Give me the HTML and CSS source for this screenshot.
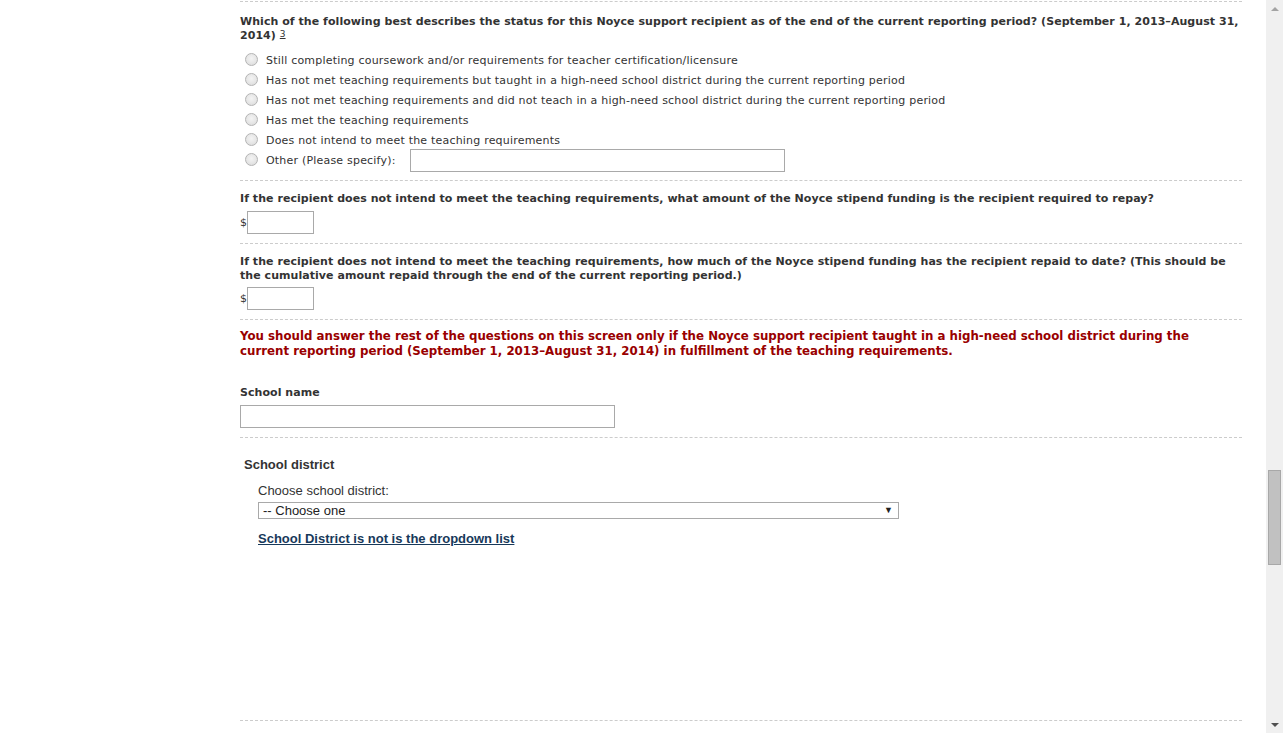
FILE: index.html
```html
<!DOCTYPE html>
<html lang="en">

<head>
  <meta charset="UTF-8">
  <title>Noyce recipient status</title>
  <link rel="stylesheet" href="styles.css">
</head>

<body>
  <div class="page">
    <!-- form area -->
    <main class="form">

      <!-- status question -->
      <div class="q q-first">
        <p class="q-title">Which of the following best describes the status for this Noyce support recipient as of the end of the current reporting period? (September 1, 2013&ndash;August 31, 2014) <a class="fn" href="#">3</a></p>
        <ul class="options">
          <li><label><input type="radio" name="status"> Still completing coursework and/or requirements for teacher certification/licensure</label></li>
          <li><label><input type="radio" name="status"> Has not met teaching requirements but taught in a high-need school district during the current reporting period</label></li>
          <li><label><input type="radio" name="status"> Has not met teaching requirements and did not teach in a high-need school district during the current reporting period</label></li>
          <li><label><input type="radio" name="status"> Has met the teaching requirements</label></li>
          <li><label><input type="radio" name="status"> Does not intend to meet the teaching requirements</label></li>
          <li><label><input type="radio" name="status"> Other (Please specify):</label><input type="text" class="txt txt-other"></li>
        </ul>
      </div>

      <!-- amount to repay -->
      <div class="q">
        <p class="q-title">If the recipient does not intend to meet the teaching requirements, what amount of the Noyce stipend funding is the recipient required to repay?</p>
        <div class="money">$<input type="text" class="txt txt-money"></div>
      </div>

      <!-- amount repaid -->
      <div class="q">
        <p class="q-title">If the recipient does not intend to meet the teaching requirements, how much of the Noyce stipend funding has the recipient repaid to date? (This should be the cumulative amount repaid through the end of the current reporting period.)</p>
        <div class="money money-tight">$<input type="text" class="txt txt-money"></div>
      </div>

      <!-- notice + school name -->
      <div class="q q-school">
        <p class="notice">You should answer the rest of the questions on this screen only if the Noyce support recipient taught in a high-need school district during the current reporting period (September 1, 2013&ndash;August 31, 2014) in fulfillment of the teaching requirements.</p>
        <p class="q-title">School name</p>
        <input type="text" class="txt txt-school">
      </div>

      <!-- school district -->
      <div class="q q-district">
        <p class="district-title">School district</p>
        <div class="district-body">
          <p class="district-label">Choose school district:</p>
          <div class="select-wrap">
            <select class="district-select">
              <option>-- Choose one</option>
            </select>
          </div>
          <a class="district-link" href="#">School District is not is the dropdown list</a>
        </div>
      </div>

      <div class="q q-last"></div>
    </main>

    <!-- page scrollbar -->
    <div class="scrollbar">
      <div class="sb-btn sb-up"></div>
      <div class="sb-track">
        <div class="sb-thumb"></div>
      </div>
      <div class="sb-btn sb-down"></div>
    </div>
  </div>
</body>

</html>
```

FILE: styles.css
```css
* {
  margin: 0;
  padding: 0;
  box-sizing: border-box;
}

body {
  font-family: "DejaVu Sans", Verdana, sans-serif;
  font-size: 11px;
  color: #333;
  background: #fff;
  overflow: hidden;
}

.page {
  display: flex;
  height: 733px;
}

/* form column */
.form {
  flex: 1;
  padding: 1px 0 0 240px;
}

.q {
  width: 1002px;
  border-top: 1px dashed #ccc;
  padding: 11px 0 9px;
}
.q-first {
  padding: 13px 0 10px;
}

.q-title {
  font-weight: bold;
  line-height: 14px;
  letter-spacing: 0.05px;
}
.fn {
  color: #333;
  font-weight: normal;
  font-size: 9px;
  line-height: 1;
  vertical-align: 2px;
}

/* radio list */
.options {
  list-style: none;
  margin-top: 7px;
  letter-spacing: 0.2px;
}
.options li {
  display: flex;
  align-items: center;
  height: 20px;
}
.options label {
  display: flex;
  align-items: center;
}
.options input[type="radio"] {
  appearance: none;
  width: 13px;
  height: 13px;
  border: 1px solid #b4b4b4;
  border-radius: 50%;
  background: radial-gradient(circle at 50% 40%, #f4f4f4 0, #e6e6e6 55%, #d8d8d8 100%);
  margin: 0 8px 0 5px;
  position: relative;
  top: -1px;
}

/* text boxes */
.txt {
  height: 23px;
  border: 1px solid #a9a9a9;
  background: #fff;
  font: inherit;
}
.txt-other {
  width: 375px;
  margin-left: 14px;
}
.txt-money {
  width: 67px;
}
.txt-school {
  width: 375px;
  display: block;
  margin-top: 5px;
}

.money {
  display: flex;
  align-items: center;
  margin-top: 5px;
}
.money-tight {
  margin-top: 4px;
}

/* notice */
.q-school {
  padding: 9px 0 9px;
}
.notice {
  color: #990000;
  font-weight: bold;
  font-size: 11.8px;
  line-height: 15px;
  margin-bottom: 27px;
}

/* school district */
.q-district {
  height: 283px;
  padding: 19px 0 0 4px;
  font-family: "Liberation Sans", Arial, sans-serif;
  font-size: 13px;
}
.district-title {
  font-weight: bold;
  color: #333;
}
.district-body {
  padding: 11px 0 0 14px;
}
.district-label {
  color: #333;
}
.select-wrap {
  position: relative;
  width: 641px;
  margin: 4px 0 12px;
}
.select-wrap::after {
  content: "\25BC";
  position: absolute;
  right: 6px;
  top: 3px;
  font-size: 9px;
  color: #222;
  pointer-events: none;
}
.district-select {
  appearance: none;
  width: 100%;
  height: 17px;
  border: 1px solid #a9a9a9;
  background: #fff;
  border-radius: 0;
  padding: 0 4px;
  font: 13px "Liberation Sans", Arial, sans-serif;
  color: #222;
}
.district-link {
  font-weight: bold;
  color: #17395a;
}

.q-last {
  padding: 0;
}

/* scrollbar */
.scrollbar {
  width: 17px;
  background: #f0f0f0;
  display: flex;
  flex-direction: column;
}
.sb-btn {
  height: 17px;
  display: flex;
  align-items: center;
  justify-content: center;
}
.sb-up::before,
.sb-down::before {
  content: "";
  width: 0;
  height: 0;
  border-left: 4px solid transparent;
  border-right: 4px solid transparent;
}
.sb-up::before {
  border-bottom: 4px solid #a3a3a3;
}
.sb-down::before {
  border-top: 4px solid #505050;
}
.sb-track {
  flex: 1;
  padding: 453px 2px 0;
}
.sb-thumb {
  height: 95px;
  background: #c1c1c1;
  border: 1px solid #a8a8a8;
}
```
